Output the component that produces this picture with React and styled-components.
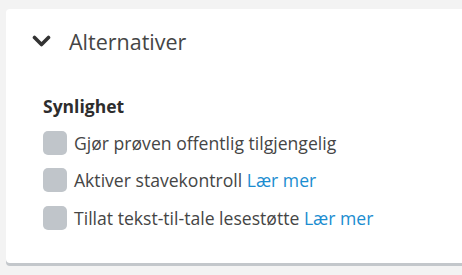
import React from "react";
import styled, { createGlobalStyle } from "styled-components";

const Global = createGlobalStyle`
  html, body { margin: 0; padding: 0; background: #f3f3f3; }
  body { font-family: "Open Sans", "Liberation Sans", sans-serif; }
`;

const Page = styled.div`
  padding: 9px 0 0 6px;
  height: 275px;
  box-sizing: border-box;
  overflow: hidden;
`;

const Card = styled.section`
  background: #fff;
  border-radius: 4px 0 0 4px;
  box-shadow: 0 3px 0 #c3c7cb;
  height: 254px;
  box-sizing: border-box;
  padding: 0 0 0 26px;
`;

const Header = styled.div`
  display: flex;
  align-items: center;
  gap: 18px;
  height: 64px;
`;

const Title = styled.h2`
  margin: 0;
  font-size: 21.5px;
  font-weight: 400;
  color: #454545;
`;

const Body = styled.div`
  padding: 21px 0 0 11px;
`;

const SectionTitle = styled.h3`
  margin: 0 0 6px;
  font-size: 17.5px;
  font-weight: 700;
  color: #2d2d2d;
`;

const Row = styled.label`
  display: flex;
  align-items: center;
  gap: 7px;
  height: 37.5px;
  font-size: 17.6px;
  color: #454545;
`;

const Box = styled.span`
  width: 24px;
  height: 24px;
  border-radius: 5px;
  background: #c0c5ca;
  flex: none;
`;

const Link = styled.a`
  color: #1b8dd0;
  text-decoration: none;
`;

const Chevron = () => (
  <svg width="19" height="12" viewBox="0 0 19 12">
    <path d="M2.5 2.5 L9.5 9.5 L16.5 2.5" fill="none" stroke="#333" strokeWidth="3.6" strokeLinecap="round" strokeLinejoin="round" />
  </svg>
);

const items = [
  { text: "Gjør prøven offentlig tilgjengelig" },
  { text: "Aktiver stavekontroll", link: true },
  { text: "Tillat tekst-til-tale lesestøtte", link: true },
];

export default function App() {
  return (
    <>
      <Global />
      <Page>
        <Card>
          <Header>
            <Chevron />
            <Title>Alternativer</Title>
          </Header>
          <Body>
            <SectionTitle>Synlighet</SectionTitle>
            {items.map((it) => (
              <Row key={it.text}>
                <Box />
                <span>
                  {it.text}
                  {it.link && <> <Link href="#">Lær mer</Link></>}
                </span>
              </Row>
            ))}
          </Body>
        </Card>
      </Page>
    </>
  );
}
